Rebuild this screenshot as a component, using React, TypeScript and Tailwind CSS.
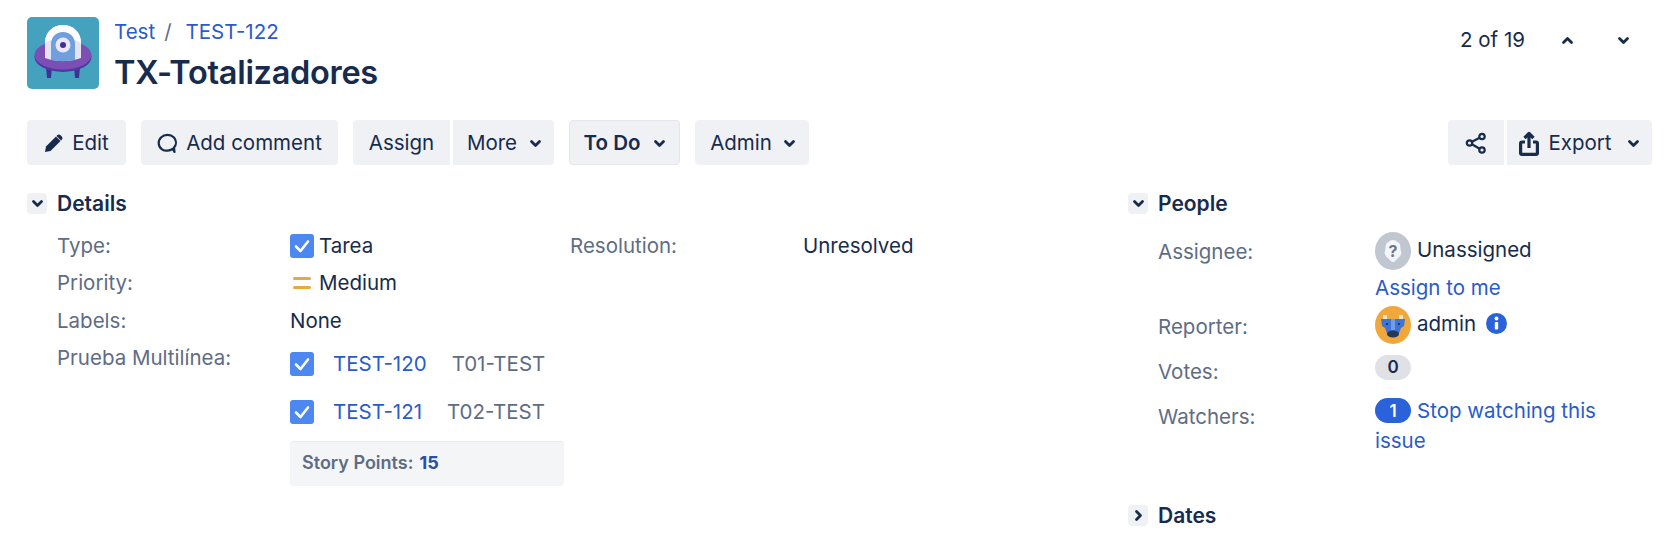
import React from "react";

const ink = "text-[#172b4d]";

function Chevron({ dir = "down", className = "" }: { dir?: "down" | "up" | "right"; className?: string }) {
  const d = dir === "down" ? "M2.5 4.5 L6.5 8.5 L10.5 4.5" : dir === "up" ? "M2.5 8.5 L6.5 4.5 L10.5 8.5" : "M4.5 2.5 L8.5 6.5 L4.5 10.5";
  return (
    <svg width="13" height="13" viewBox="0 0 13 13" fill="none" className={className}>
      <path d={d} stroke="#172b4d" strokeWidth="2.8" strokeLinecap="round" strokeLinejoin="round" />
    </svg>
  );
}

function ProjectAvatar() {
  return (
    <svg width="72" height="72" viewBox="0 0 72 72" className="shrink-0 rounded-[5px]">
      <rect width="72" height="72" fill="#45a2bf" />
      <path d="M19 50h6l-1 11h-4z" fill="#403294" />
      <path d="M47 50h6l-1 11h-4z" fill="#403294" />
      <ellipse cx="36" cy="40" rx="28.5" ry="15" fill="#5136a6" />
      <ellipse cx="36" cy="38" rx="28.5" ry="14.5" fill="#7c4fb5" />
      <path d="M18 41 V26 C18 15 26 8 36 8 C46 8 54 15 54 26 V41 C44 45 28 45 18 41Z" fill="#e6e4f3" />
      <path d="M18 26 C18 15 26 8 36 8 C46 8 54 15 54 26 C46 20 26 20 18 26Z" fill="#ffffff" />
      <path d="M24 43 V27 C24 20 29 15 36 15 C43 15 48 20 48 27 V43 C40 44.5 32 44.5 24 43Z" fill="#6f9fdc" />
      <circle cx="36" cy="28" r="7.5" fill="#e9e7f5" />
      <circle cx="36" cy="28" r="3" fill="#403294" />
    </svg>
  );
}

function Btn({ children, className = "" }: { children: React.ReactNode; className?: string }) {
  return (
    <div className={`flex h-[45px] items-center justify-center bg-[#f0f1f4] pt-[1px] text-[20.5px] ${ink} ${className}`}>
      {children}
    </div>
  );
}

function Check({ size = 24 }: { size?: number }) {
  return (
    <svg width={size} height={size} viewBox="0 0 24 24" className="shrink-0">
      <rect width="24" height="24" rx="3" fill="#4c88f0" />
      <path d="M6 12.5 L10.5 17 L18 7.5" fill="none" stroke="#fff" strokeWidth="2.6" strokeLinecap="round" strokeLinejoin="round" />
    </svg>
  );
}

function SectionHead({ title, open = true }: { title: string; open?: boolean }) {
  return (
    <div className="flex items-center gap-[10px]">
      <div className="flex h-[21px] w-[20px] items-center justify-center rounded-[4px] bg-[#f0f1f4]">
        <Chevron dir={open ? "down" : "right"} />
      </div>
      <span className={`text-[21px] font-semibold ${ink}`}>{title}</span>
    </div>
  );
}

function UnknownAvatar() {
  return (
    <svg width="36" height="38" viewBox="0 0 36 38" className="shrink-0">
      <ellipse cx="18" cy="19" rx="18" ry="19" fill="#c1c7d0" />
      <path d="M18 8c3 0 4 2 6 3 2 2 1 5 2 8s-1 6-3 7c-2 2-3 4-5 4s-3-2-5-4c-2-1-4-4-3-7s0-6 2-8c2-1 3-3 6-3z" fill="#f4f5f7" />
      <text x="18" y="25" textAnchor="middle" fontSize="16" fontWeight="700" fill="#6b778c" fontFamily="Inter, sans-serif">?</text>
    </svg>
  );
}

function AdminAvatar() {
  return (
    <svg width="36" height="38" viewBox="0 0 36 38" className="shrink-0">
      <ellipse cx="18" cy="19" rx="18" ry="19" fill="#f0a83c" />
      <path d="M6 13 h24 l-1 7 l-3 2 l-3 8 h-10 l-3 -8 l-3 -2z" fill="#3f74d6" />
      <path d="M8 9 h4 v4 h-4z M24 9 h4 v4 h-4z" fill="#f5e6c8" />
      <path d="M16 13 h4 v11 h-4z" fill="#6f9fe6" />
      <ellipse cx="18" cy="28" rx="6" ry="3.4" fill="#253858" />
      <circle cx="12" cy="18" r="1" fill="#172b4d" />
      <circle cx="24" cy="18" r="1" fill="#172b4d" />
    </svg>
  );
}

function DetailRow({ label, children, className = "" }: { label: string; children: React.ReactNode; className?: string }) {
  return (
    <div className={`flex text-[20.5px] leading-[26px] ${className}`}>
      <div className="w-[233px] shrink-0 text-[#5e6c84]">{label}</div>
      <div className={`flex items-center ${ink}`}>{children}</div>
    </div>
  );
}

function IssueLink({ id, name, gap }: { id: string; name: string; gap: string }) {
  return (
    <div className="flex h-[26px] items-center">
      <Check />
      <span className="ml-[19px] text-[#2a5bc9]">{id}</span>
      <span className={`text-[#5e6c84] ${gap}`}>{name}</span>
    </div>
  );
}

function PeopleRow({ label, children, className = "" }: { label: string; children: React.ReactNode; className?: string }) {
  return (
    <div className={`flex text-[20.5px] leading-[26px] ${className}`}>
      <div className="w-[217px] shrink-0 text-[#5e6c84]">{label}</div>
      <div className={`min-w-0 flex-1 ${ink}`}>{children}</div>
    </div>
  );
}

export default function App() {
  return (
    <div className="h-[534px] overflow-hidden bg-white pl-[27px] pr-[14px] pt-[17px] font-['Inter',sans-serif]">
      <div className="flex">
        <ProjectAvatar />
        <div className="ml-[15px] flex-1">
          <div className="mt-[1px] flex h-[28px] items-center text-[20.5px] text-[#2a5bc9]">
            <span>Test</span>
            <span className="ml-[9px] text-[#5e6c84]">/</span>
            <span className="ml-[14px]">TEST-122</span>
          </div>
          <h1 className={`mt-[10px] text-[32.5px] font-semibold leading-[33px] tracking-[-0.3px] ${ink}`}>TX-Totalizadores</h1>
        </div>
        <div className={`flex h-[46px] items-center text-[20.5px] ${ink}`}>
          <span className="mr-[36px]">2 of 19</span>
          <Chevron dir="up" />
          <Chevron className="ml-[43px] mr-[22px]" />
        </div>
      </div>

      <div className="mt-[31px] flex">
        <Btn className="w-[99px] gap-[8px] rounded-[4px]">
          <svg width="20" height="20" viewBox="0 0 20 20">
            <path d="M1 19 L2 13.5 L12 3.5 L16.5 8 L6.5 18Z" fill="#172b4d" />
            <path d="M13.2 2.3 C14.2 1.3 15.6 1.3 16.6 2.3 L17.7 3.4 C18.7 4.4 18.7 5.8 17.7 6.8 L17 7.5 L12.5 3Z" fill="#172b4d" />
          </svg>
          Edit
        </Btn>
        <Btn className="ml-[15px] w-[197px] gap-[8px] rounded-[4px]">
          <svg width="21" height="21" viewBox="0 0 21 21" fill="none">
            <path d="M17.5 19 L15.6 15.8 C13 18 8 18.4 5 16.3 C1 13.5 0.6 8 4 4.5 C7.5 1 13.5 1 17 4.5 C19.6 7.5 19.6 11.5 17 14.5Z" stroke="#172b4d" strokeWidth="2.2" strokeLinejoin="round" />
          </svg>
          Add comment
        </Btn>
        <Btn className="ml-[15px] w-[97px] rounded-l-[4px]">Assign</Btn>
        <Btn className="ml-[3px] w-[101px] gap-[12px] rounded-r-[4px] pl-[2px]">
          More
          <Chevron />
        </Btn>
        <Btn className="ml-[15px] w-[111px] gap-[13px] rounded-[4px] border border-[#e4e6ea] pl-[1px] font-semibold">
          To Do
          <Chevron />
        </Btn>
        <Btn className="ml-[15px] w-[114px] gap-[11px] rounded-[4px] pl-[2px]">
          Admin
          <Chevron />
        </Btn>
        <div className="flex-1" />
        <Btn className="w-[56px] rounded-l-[4px]">
          <svg width="22" height="22" viewBox="0 0 22 22" fill="none" stroke="#172b4d" strokeWidth="2.2">
            <circle cx="17" cy="4.5" r="2.7" />
            <circle cx="4.5" cy="11" r="2.7" />
            <circle cx="17" cy="18" r="2.7" />
            <path d="M7 9.7 L14.6 5.7 M7 12.3 L14.6 16.7" />
          </svg>
        </Btn>
        <Btn className="ml-[3px] w-[145px] gap-[9px] rounded-r-[4px]">
          <svg width="20" height="25" viewBox="0 0 20 25" fill="none" stroke="#172b4d" strokeWidth="3.2">
            <path d="M6 11 H3 C2 11 1.6 11.4 1.6 12.4 V22 C1.6 23 2 23.4 3 23.4 H17 C18 23.4 18.4 23 18.4 22 V12.4 C18.4 11.4 18 11 17 11 H14" />
            <path d="M10 17 V2.5 M5.5 7 L10 2.5 L14.5 7" strokeLinejoin="round" />
          </svg>
          Export
          <Chevron className="ml-[6px]" />
        </Btn>
      </div>

      <div className="mt-[23px] flex">
        <div className="w-[1101px] shrink-0">
          <SectionHead title="Details" />
          <div className="ml-[30px] mt-[13px] flex">
            <div className="w-[513px] shrink-0">
              <DetailRow label="Type:">
                <Check />
                <span className="ml-[5px]">Tarea</span>
              </DetailRow>
              <DetailRow label="Priority:" className="mt-[11px]">
                <span className="flex w-[24px] shrink-0 flex-col gap-[6px] px-[3px]">
                  <span className="h-[3px] rounded-full bg-[#e9a83c]" />
                  <span className="h-[3px] rounded-full bg-[#e9a83c]" />
                </span>
                <span className="ml-[5px]">Medium</span>
              </DetailRow>
              <DetailRow label="Labels:" className="mt-[12px]">None</DetailRow>
              <DetailRow label="Prueba Multilínea:" className="mt-[11px]">
                <div className="mt-[6px] flex flex-col gap-[22px] self-start">
                  <IssueLink id="TEST-120" name="T01-TEST" gap="ml-[25px]" />
                  <IssueLink id="TEST-121" name="T02-TEST" gap="ml-[25px]" />
                  <div className="mt-[-6px] flex h-[45px] w-[274px] items-center rounded-[4px] border-t border-[#e8eaee] bg-[#f4f5f7] pb-[1px] pl-[12px] text-[18px] font-semibold text-[#5e6c84]">
                    Story Points:
                    <span className="ml-[6px] font-bold text-[#2a4fa8]">15</span>
                  </div>
                </div>
              </DetailRow>
            </div>
            <div className="flex h-[26px] text-[20.5px] leading-[26px]">
              <div className="w-[233px] text-[#5e6c84]">Resolution:</div>
              <div className={ink}>Unresolved</div>
            </div>
          </div>
        </div>

        <div className="flex-1">
          <SectionHead title="People" />
          <div className="ml-[30px] mt-[13px] flex flex-col">
            <PeopleRow label="Assignee:" className="pt-[6px]">
              <div className="mt-[-7px] flex items-center gap-[6px]">
                <UnknownAvatar />
                <span className="mb-[2px]">Unassigned</span>
              </div>
              <div className="mt-[5px] text-[#2a5bc9]">Assign to me</div>
            </PeopleRow>
            <PeopleRow label="Reporter:" className="mt-[13px]">
              <div className="mt-[-8px] flex items-center gap-[6px]">
                <AdminAvatar />
                <span className="mb-[2px]">admin</span>
                <svg width="21" height="21" viewBox="0 0 21 21" className="mb-[2px] ml-[4px]">
                  <circle cx="10.5" cy="10.5" r="10.5" fill="#2a62d9" />
                  <circle cx="10.5" cy="5.5" r="1.9" fill="#fff" />
                  <rect x="8.8" y="9" width="3.4" height="7.5" rx="1" fill="#fff" />
                </svg>
              </div>
            </PeopleRow>
            <PeopleRow label="Votes:" className="mt-[15px]">
              <div className="mt-[-4px] flex h-[25px] w-[36px] items-center justify-center rounded-full bg-[#dfe1e6] text-[17px] font-semibold">0</div>
            </PeopleRow>
            <PeopleRow label="Watchers:" className="mt-[19px]">
              <div className="mt-[-8px] leading-[30px] text-[#2a5bc9]">
                <div className="flex items-center gap-[6px]">
                  <span className="flex h-[25px] w-[36px] items-center justify-center rounded-full bg-[#2a62d9] text-[17px] font-semibold text-white">1</span>
                  <span>Stop watching this</span>
                </div>
                <div>issue</div>
              </div>
            </PeopleRow>
            <div className="-ml-[30px] mt-[44px]">
              <SectionHead title="Dates" open={false} />
            </div>
          </div>
        </div>
      </div>
    </div>
  );
}
